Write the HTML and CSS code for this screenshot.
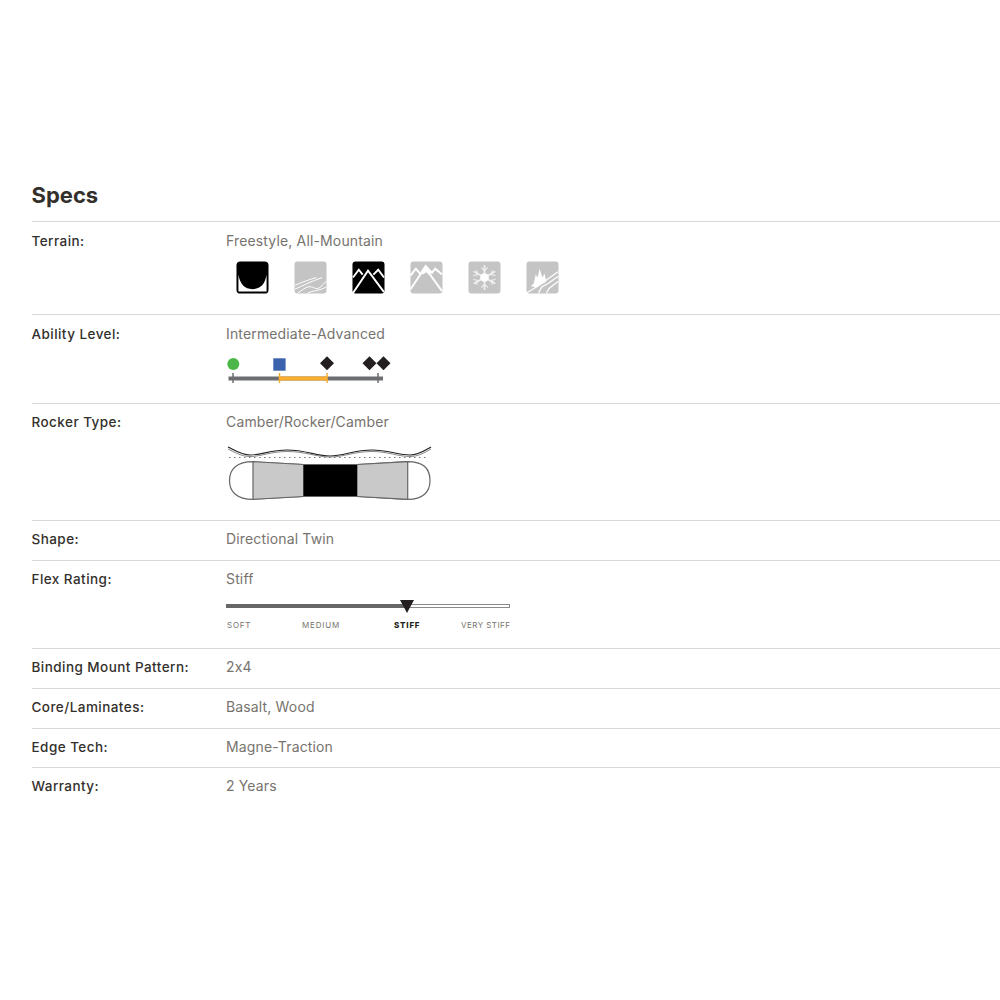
FILE: index.html
```html
<!DOCTYPE html>
<html lang="en">
<head>
<meta charset="utf-8">
<title>Specs</title>
<link rel="stylesheet" href="styles.css">
</head>
<body>
<section class="specs">
  <h2 class="title">Specs</h2>
  <div class="row lead">
    <div class="label">Terrain:</div>
    <div class="value">
      <div>Freestyle, All-Mountain</div>
      <div class="terrain">
        <svg class="ticon" viewBox="0 0 34 34"><rect x="0.5" y="0.5" width="33" height="33" rx="4" fill="#000"/><path d="M2.500 14C4 24 9 29 17 29S30 24 31.500 14V31.500H2.500Z" fill="#fff"/></svg>
        <svg class="ticon" viewBox="0 0 34 34"><rect x="0.5" y="0.5" width="33" height="33" rx="3" fill="#c4c4c4"/><path d="M1 25C8 22 16 19 23 17M1 29C10 25 18 21 29 17M4 33C10 29 14 25 19 27S25 30 33 21M14 33C20 30 26 31 33 27" fill="none" stroke="#fff" stroke-width="1"/></svg>
        <svg class="ticon" viewBox="0 0 34 34"><rect x="0.5" y="0.5" width="33" height="33" rx="3" fill="#000"/><path d="M1 33L16.500 10L33 32M1 17L7 9L11 14M22 14L27 9L33 17" fill="none" stroke="#fff" stroke-width="2"/></svg>
        <svg class="ticon" viewBox="0 0 34 34"><rect x="0.5" y="0.5" width="33" height="33" rx="3" fill="#c4c4c4"/><path d="M11 11L16 3.500L23 11L19.500 14L16.500 11.500L13.500 14Z" fill="#fff"/><path d="M0.500 29L15.500 7L33 31M0.500 15L6 8L10.500 13M22 13L26 8L33 14" fill="none" stroke="#fff" stroke-width="2"/></svg>
        <svg class="ticon" viewBox="0 0 34 34"><rect x="0.5" y="0.5" width="33" height="33" rx="3" fill="#c4c4c4"/><g stroke="#f0f0f0" stroke-width="1.800" stroke-linecap="round"><path d="M17 5V29M6.600 11L27.400 23M6.600 23L27.400 11"/><path d="M14 7L17 10L20 7M14 27L17 24L20 27M6 15L10 14L9 10M28 15L24 14L25 10M6 19L10 20L9 24M28 19L24 20L25 24" fill="none" stroke-width="1.200"/></g><circle cx="17" cy="17" r="4.500" fill="#fff"/></svg>
        <svg class="ticon" viewBox="0 0 34 34"><rect x="0.5" y="0.5" width="33" height="33" rx="3" fill="#c4c4c4"/><path d="M5 26L8 23L10 14L12 17L14 8L17 17L19 13L21 21L11 27Z" fill="#fff"/><path d="M0.500 33L12 26L33 11M13 33L16 27L23 23L33 16M21 33L24 28L33 21" fill="none" stroke="#fff" stroke-width="1.300"/></svg>
      </div>
    </div>
  </div>
  <div class="row lead">
    <div class="label">Ability Level:</div>
    <div class="value">
      <div>Intermediate-Advanced</div>
      <svg class="ability" viewBox="0 0 170 32" width="170" height="32">
        <circle cx="7.300" cy="10" r="6" fill="#4cb748"/>
        <rect x="47.300" y="4.300" width="12.300" height="12.400" fill="#3a62ad"/>
        <path d="M101 2.300L108 9.300L101 16.300L94 9.300Z" fill="#231f20"/>
        <path d="M143.500 2.300L150.500 9.300L143.500 16.300L136.500 9.300Z" fill="#231f20"/>
        <path d="M157.500 2.300L164.500 9.300L157.500 16.300L150.500 9.300Z" fill="#231f20"/>
        <rect x="2.500" y="22.500" width="154.500" height="4" fill="#6d6e71"/>
        <rect x="53.500" y="22.500" width="47.500" height="4" fill="#f9ae2f"/>
        <path d="M7 19V29M152 19V29" stroke="#6d6e71" stroke-width="1.500"/>
        <path d="M53.500 19V29M101 19V29" stroke="#f9ae2f" stroke-width="1.500"/>
      </svg>
    </div>
  </div>
  <div class="row">
    <div class="label">Rocker Type:</div>
    <div class="value">
      <div>Camber/Rocker/Camber</div>
      <svg class="rocker" viewBox="0 0 206 60" width="206" height="60">
        <path d="M2 4C10 8 16 12 24 12C35 12 45 7 61 7C80 7 90 13 104 13C118 13 128 7 146 7C162 7 172 12 184 12C192 12 198 8 205 4" fill="none" stroke="#222" stroke-width="1.200"/>
        <path d="M2 6C10 10 16 13.500 24 13.500C35 13.500 45 8.500 61 8.500C80 8.500 90 14 104 14C118 14 128 8.500 146 8.500C162 8.500 172 13.500 184 13.500C192 13.500 198 10 205 6" fill="none" stroke="#888" stroke-width="1"/>
        <path d="M3 14.500H203" stroke="#777" stroke-width="1" stroke-dasharray="1.500 3.500"/>
        <path d="M27 18.700L77.300 21.500H131.300L181.700 18.700C197 18.700 204 26 204 37.500C204 49 197 56.300 181.700 56.300L131.300 53.500H77.300L27 56.300C11 56.300 3.500 49 3.500 37.500C3.500 26 11 18.700 27 18.700Z" fill="#fff" stroke="#666" stroke-width="1.200"/>
        <path d="M27 18.700L77.300 21.500H131.300L181.700 18.700V56.300L131.300 53.500H77.300L27 56.300Z" fill="#c9c9c9" stroke="#666" stroke-width="1.200"/>
        <rect x="77.300" y="22" width="54" height="31" fill="#000"/>
      </svg>
    </div>
  </div>
  <div class="row">
    <div class="label">Shape:</div>
    <div class="value">Directional Twin</div>
  </div>
  <div class="row">
    <div class="label">Flex Rating:</div>
    <div class="value">
      <div>Stiff</div>
      <div class="flex">
        <div class="track">
          <div class="fill"></div>
          <svg class="thumb" viewBox="0 0 14 13" width="14" height="13"><path d="M0 0H14L7 13Z" fill="#231f20"/></svg>
        </div>
        <div class="ticks">
          <span>SOFT</span><span>MEDIUM</span><span class="on">STIFF</span><span class="tight">VERY STIFF</span>
        </div>
      </div>
    </div>
  </div>
  <div class="row">
    <div class="label">Binding Mount Pattern:</div>
    <div class="value">2x4</div>
  </div>
  <div class="row compact">
    <div class="label">Core/Laminates:</div>
    <div class="value">Basalt, Wood</div>
  </div>
  <div class="row compact">
    <div class="label">Edge Tech:</div>
    <div class="value">Magne-Traction</div>
  </div>
  <div class="row">
    <div class="label">Warranty:</div>
    <div class="value">2 Years</div>
  </div>
</section>
</body>
</html>
```
FILE: styles.css
```css
* { box-sizing: border-box; }
html, body { margin: 0; padding: 0; background: #fff; }
body { font-family: Inter, "Liberation Sans", sans-serif; height: 1000px; overflow: hidden; font-feature-settings: "calt" 0; }
.specs { padding: 180px 0 0 31.500px; }
.title { margin: 0; font-size: 22px; line-height: 30px; height: 41px; font-weight: 700; color: #33302c; }
.row { display: grid; grid-template-columns: 194.500px 1fr; border-top: 1px solid #d8d8d8; padding: 8px 0 11px; }
.lead { padding: 9px 0 10px; }
.compact { padding-bottom: 10.700px; }
.label { font-size: 13.500px; line-height: 20px; font-weight: 500; letter-spacing: 0.450px; color: #33302c; }
.value { font-size: 14px; line-height: 20px; letter-spacing: 0.150px; color: #77736e; }
.terrain { display: flex; gap: 25px; padding: 10px 0 10px 10px; }
.ticon { width: 33px; height: 33px; display: block; }
.ability { display: block; margin: 10px 0 7px 0; }
.rocker { display: block; margin: 11px 0 6px 0; }
.flex { width: 286px; margin-top: 15px; padding-bottom: 7px; }
.track { position: relative; height: 4px; border: 1px solid #8a8a8a; border-left: 0; background: #fff; margin: 0 0 12px 1px; width: 283px; }
.fill { height: 2px; width: 178px; background: #666; box-shadow: 0 0 0 1px #666; }
.thumb { position: absolute; left: 173px; top: -5px; }
.ticks { display: grid; grid-template-columns: 75px 92px 67px 1fr; padding-left: 1px; font-size: 8px; line-height: 10px; letter-spacing: 0.800px; white-space: nowrap; color: #77736e; }
.on { font-weight: 800; color: #231f20; }
.tight { letter-spacing: 0.450px; }
```
